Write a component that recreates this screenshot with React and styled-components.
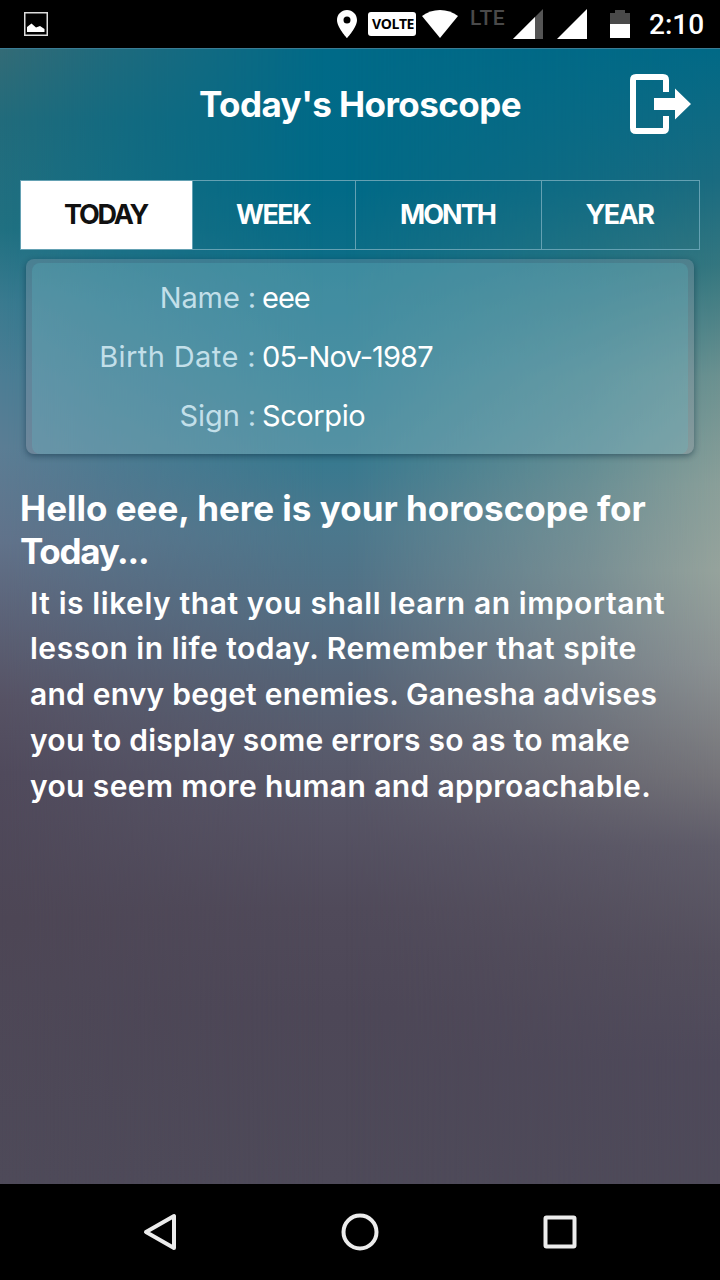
import React from 'react'
import styled, { createGlobalStyle } from 'styled-components'

const GlobalStyle = createGlobalStyle`
  * {
    box-sizing: border-box;
  }

  body {
    margin: 0;
    background: #000;
    font-family: Inter, "Liberation Sans", sans-serif;
    color: #fff;
  }
`

const tabs = [
  { label: 'TODAY', width: 172, spacing: '-2.2px', active: true },
  { label: 'WEEK', width: 163, spacing: '-1.5px' },
  { label: 'MONTH', width: 186, spacing: '-1.9px' },
  { label: 'YEAR', width: 157, spacing: '-1.5px' }
]

const details = [
  { label: 'Name', value: 'eee', labelSpacing: '-0.1px', spacing: '-1px' },
  { label: 'Birth Date', value: '05-Nov-1987', labelSpacing: '0.4px', spacing: '-0.9px' },
  { label: 'Sign', value: 'Scorpio', labelSpacing: '-0.1px', spacing: '-0.4px' }
]

const reading = [
  { text: 'It is likely that you shall learn an important', spacing: '0.58px' },
  { text: 'lesson in life today. Remember that spite', spacing: '0.52px' },
  { text: 'and envy beget enemies. Ganesha advises', spacing: '0.22px' },
  { text: 'you to display some errors so as to make', spacing: '0.26px' },
  { text: 'you seem more human and approachable.', spacing: '0.38px' }
]

const Phone = styled.div`
  display: flex;
  flex-direction: column;
  width: 720px;
  height: 1280px;
  overflow: hidden;
`

const StatusBar = styled.header`
  display: flex;
  align-items: center;
  height: 48px;
  padding: 0 16px 0 24px;
  background: #000;
`

const StatusIcon = styled.svg`
  display: block;
  flex: none;
  margin-left: ${props => props.$gap || 0}px;
`

const StatusIcons = styled.div`
  display: flex;
  align-items: center;
  height: 48px;
  margin-left: auto;
`

const Volte = styled.span`
  width: 48px;
  height: 24px;
  margin-left: 11px;
  padding-left: 2px;
  border-radius: 3px;
  background: #fff;
  color: #000;
  font: 700 14px/24px "Open Sans", sans-serif;
  letter-spacing: -0.4px;
  text-align: center;
`

const Lte = styled.span`
  width: 36px;
  height: 48px;
  margin-left: 12px;
  color: #4a4a4a;
  font: 500 21px/36px Roboto, sans-serif;
  letter-spacing: 0.6px;
`

const Clock = styled.span`
  width: 55px;
  margin-left: 19px;
  font: 500 28px/48px Roboto, sans-serif;
  padding-top: 2px;
  white-space: nowrap;
`

const Screen = styled.main`
  position: relative;
  isolation: isolate;
  display: flex;
  flex-direction: column;
  height: 1136px;
  border-top: 1px solid #3b7c95;
  background: linear-gradient(
    #006a88 0,
    #016a87 140px,
    #0c6d87 210px,
    #1f738b 310px,
    #37798f 410px,
    #4b788d 480px,
    #536f84 560px,
    #566477 630px,
    #585b6c 700px,
    #565364 770px,
    #504a5a 860px,
    #4d4757 960px,
    #4e4a59 1136px
  );

  /* side glows, faded towards the middle */
  &::before,
  &::after {
    content: '';
    position: absolute;
    inset: 0;
    z-index: -1;
  }

  &::before {
    background: linear-gradient(
      #336b76 0,
      #216b7b 72px,
      #207081 180px,
      #3a7a8f 254px,
      #4c7d94 326px,
      #5b7d94 398px,
      #61728a 493px,
      #5c6378 565px,
      #565264 652px,
      #504a5c 724px,
      #4d4655 870px,
      #4e4a59 1136px
    );
    mask-image: linear-gradient(to right, #000, rgba(0, 0, 0, 0.6) 15%, transparent 45%);
  }

  &::after {
    background: linear-gradient(
      #016986 0,
      #1a6b80 130px,
      #34767f 217px,
      #6b9190 326px,
      #8a9f99 435px,
      #96a39c 522px,
      #8c9293 616px,
      #757479 725px,
      #5f5c69 797px,
      #544f5d 906px,
      #4e495a 1014px,
      #4e4a59 1136px
    );
    mask-image: linear-gradient(to left, #000, rgba(0, 0, 0, 0.58) 18%, transparent 52%);
  }
`

const TitleBar = styled.div`
  display: grid;
  grid-template-columns: 60px 1fr 60px;
  align-items: center;
  height: 110px;
  padding: 0 30px;
`

const Title = styled.h1`
  grid-column: 2;
  margin: 0;
  font-size: 35px;
  line-height: 40px;
  font-weight: 700;
  letter-spacing: -0.55px;
  text-align: center;
  white-space: nowrap;
`

const Tabs = styled.nav`
  display: flex;
  height: 70px;
  margin: 21px 20px 0;
  border: 1px solid #64a1b3;
`

const Tab = styled.button`
  width: ${props => props.$width}px;
  padding: 0 2px 0 0;
  border: 0;
  border-right: 1px solid #64a1b3;
  background: ${props => props.$active ? '#fff' : 'transparent'};
  color: ${props => props.$active ? '#111' : '#fff'};
  font: 700 27px/68px Inter, sans-serif;
  letter-spacing: ${props => props.$spacing};

  &:last-child {
    border-right: 0;
  }
`

const Card = styled.section`
  height: 195px;
  margin: 9px 26px 0;
  padding: 4px 6px 0;
  border-radius: 8px;
  background: rgba(165, 160, 175, 0.28);
  box-shadow: 0 2px 6px rgba(0, 30, 50, 0.45);
`

const CardBody = styled.dl`
  display: flex;
  flex-direction: column;
  height: 191px;
  margin: 0;
  padding-top: 5px;
  border-radius: 8px;
  background: rgba(90, 205, 215, 0.2);
`

const Row = styled.div`
  display: grid;
  grid-template-columns: 224px 1fr;
  column-gap: 6px;
  height: 59px;
  font-size: 29px;
  line-height: 59px;
  white-space: nowrap;
`

const Label = styled.dt`
  color: #c2dfe9;
  letter-spacing: ${props => props.$spacing};
  text-align: right;
`

const Value = styled.dd`
  margin: 0;
  letter-spacing: ${props => props.$spacing};
`

const Greeting = styled.h2`
  margin: 33px 20px 0;
  font-size: 35px;
  line-height: 43px;
  font-weight: 700;
`

const Reading = styled.p`
  margin: 7.5px 30px 0;
  font-size: 30px;
  line-height: 45.8px;
  font-weight: 600;
`

const Line = styled.span`
  display: block;
  letter-spacing: ${props => props.$spacing};
  white-space: nowrap;
`

const NavBar = styled.footer`
  display: flex;
  justify-content: space-between;
  align-items: center;
  height: 96px;
  padding: 0 140px;
  background: #000;
`

const NavIcon = styled.svg`
  display: block;
  fill: none;
  stroke: #ececec;
  stroke-width: 4;
  stroke-linejoin: round;
`

const App = () => (
  <>
    <GlobalStyle />
    <Phone>
      <StatusBar>
        <StatusIcon width='24' height='24' viewBox='0 0 24 24'>
          <rect x='0.75' y='0.75' width='22.5' height='22.5' fill='none' stroke='#ddd' strokeWidth='1.5' />
          <path d='M3 20V15L7.5 11.5L12 15.5L16 14L20.5 17V20Z' fill='#fff' />
        </StatusIcon>
        <StatusIcons>
          <StatusIcon width='20' height='28' viewBox='0 0 20 28'>
            <path fillRule='evenodd' fill='#fff' d='M10 0C4.500 0 0 4.400 0 9.900C0 17.300 10 28 10 28S20 17.300 20 9.900C20 4.400 15.500 0 10 0ZM10 6.400A3.500 3.500 0 1 1 10 13.400A3.500 3.500 0 1 1 10 6.400Z' />
          </StatusIcon>
          <Volte>VOLTE</Volte>
          <StatusIcon $gap={6} width='36' height='28' viewBox='0 0 36 28'>
            <path fill='#fff' d='M0 6C10 -2 26 -2 36 6L18 28Z' />
          </StatusIcon>
          <Lte>LTE</Lte>
          <StatusIcon $gap={7} width='30' height='30' viewBox='0 0 30 30'>
            <path fill='#555' d='M30 0V30H0Z' />
            <path fill='#fff' d='M22 8V30H0Z' />
          </StatusIcon>
          <StatusIcon $gap={14} width='30' height='30' viewBox='0 0 30 30'>
            <path fill='#fff' d='M30 0V30H0Z' />
          </StatusIcon>
          <StatusIcon $gap={23} width='20' height='30' viewBox='0 0 20 30'>
            <path fill='#4a4a4a' d='M5 1H15V4H20V15H0V4H5Z' />
            <path fill='#fff' d='M0 15H20V29H0Z' />
          </StatusIcon>
          <Clock>2:10</Clock>
        </StatusIcons>
      </StatusBar>

      <Screen>
        <TitleBar>
          <Title>Today's Horoscope</Title>
          <svg width='61' height='60' viewBox='0 0 61 60' aria-label='Log out'>
            <path d='M36 18V6Q36 3 33 3H6Q3 3 3 6V54Q3 57 6 57H33Q36 57 36 54V42' fill='none' stroke='#fff' strokeWidth='6' />
            <path d='M24 24H45V14.500L61 30L45 45.500V36H24Z' fill='#fff' />
          </svg>
        </TitleBar>

        <Tabs>
          {tabs.map(tab => (
            <Tab key={tab.label} $width={tab.width} $spacing={tab.spacing} $active={tab.active}>{tab.label}</Tab>
          ))}
        </Tabs>

        <Card>
          <CardBody>
            {details.map(item => (
              <Row key={item.label}>
                <Label $spacing={item.labelSpacing}>{item.label} :</Label>
                <Value $spacing={item.spacing}>{item.value}</Value>
              </Row>
            ))}
          </CardBody>
        </Card>

        <Greeting>
          <Line $spacing='0'>Hello eee, here is your horoscope for</Line>
          <Line $spacing='-1.3px'>Today...</Line>
        </Greeting>
        <Reading>
          {reading.map(line => (
            <Line key={line.text} $spacing={line.spacing}>{line.text}</Line>
          ))}
        </Reading>
      </Screen>

      <NavBar>
        <NavIcon width='40' height='40' viewBox='0 0 40 40'>
          <path d='M34 4V36L6 20Z' />
        </NavIcon>
        <NavIcon width='40' height='40' viewBox='0 0 40 40'>
          <circle cx='20' cy='20' r='16.500' />
        </NavIcon>
        <NavIcon width='40' height='40' viewBox='0 0 40 40'>
          <rect x='5.500' y='5.500' width='29' height='29' rx='1' />
        </NavIcon>
      </NavBar>
    </Phone>
  </>
)

export default App
